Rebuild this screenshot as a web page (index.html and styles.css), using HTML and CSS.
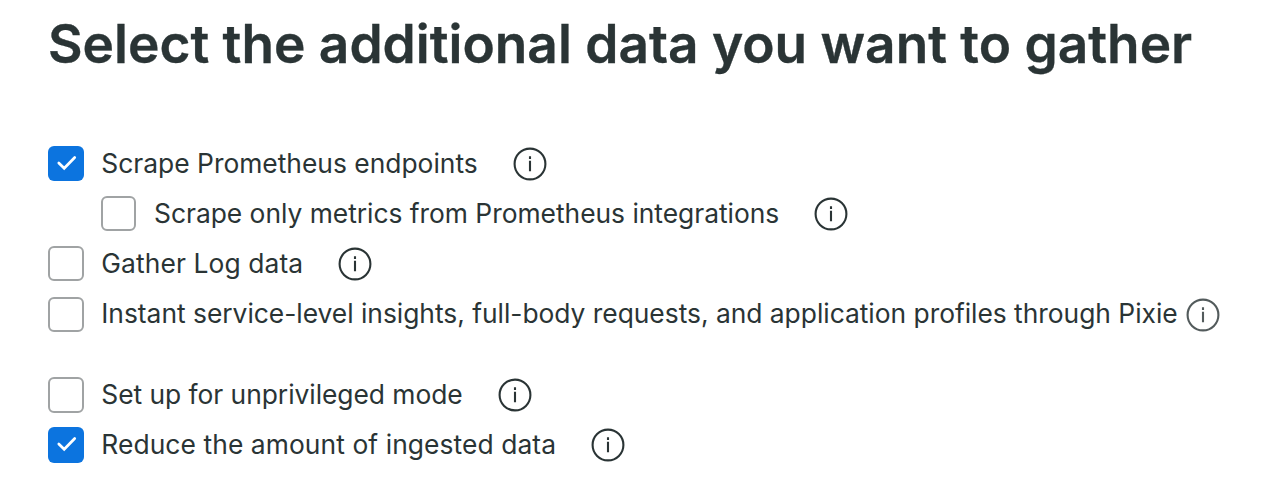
FILE: index.html
```html
<!DOCTYPE html>
<html lang="en">
<head>
<meta charset="utf-8">
<title>Select the additional data you want to gather</title>
<link rel="stylesheet" href="styles.css">
</head>
<body>
<main class="page">
<h1 class="title">Select the additional data you want to gather</h1>
<div class="row"><span class="box checked"><svg viewBox="0 0 36 35"><path d="M10.8 17l5.4 5.3 10.5-10.8"/></svg></span><span class="label">Scrape Prometheus endpoints</span><svg class="info" viewBox="0 0 34 34"><circle cx="17" cy="17" r="15.4"/><path d="M17 9.3v2.6M17 13.8v10.5"/></svg></div>
<div class="row nested"><span class="box"></span><span class="label">Scrape only metrics from Prometheus integrations</span><svg class="info" viewBox="0 0 34 34"><circle cx="17" cy="17" r="15.4"/><path d="M17 9.3v2.6M17 13.8v10.5"/></svg></div>
<div class="row log"><span class="box"></span><span class="label">Gather Log data</span><svg class="info" viewBox="0 0 34 34"><circle cx="17" cy="17" r="15.4"/><path d="M17 9.3v2.6M17 13.8v10.5"/></svg></div>
<div class="row pixie"><span class="box"></span><span class="label">Instant service-level insights, full-body requests, and application profiles through Pixie</span><svg class="info" viewBox="0 0 34 34"><circle cx="17" cy="17" r="15.4"/><path d="M17 9.3v2.6M17 13.8v10.5"/></svg></div>
<div class="row mode"><span class="box tall"></span><span class="label">Set up for unprivileged mode</span><svg class="info" viewBox="0 0 34 34"><circle cx="17" cy="17" r="15.4"/><path d="M17 9.3v2.6M17 13.8v10.5"/></svg></div>
<div class="row reduce"><span class="box tall checked"><svg viewBox="0 0 36 35"><path d="M10.8 17l5.4 5.3 10.5-10.8"/></svg></span><span class="label">Reduce the amount of ingested data</span><svg class="info" viewBox="0 0 34 34"><circle cx="17" cy="17" r="15.4"/><path d="M17 9.3v2.6M17 13.8v10.5"/></svg></div>
</main>
</body>
</html>
```

FILE: styles.css
```css
* { box-sizing: border-box; }
body { margin: 0; background: #fff; color: #2a3435; font-family: Inter, sans-serif; }
.page { padding: 11px 0 0 48px; }
.title { margin: 0 0 61.5px; font-size: 53.2px; line-height: 66px; font-weight: 600; white-space: nowrap; -webkit-text-stroke: 0.35px #2a3435; }
.row { display: flex; align-items: center; height: 50px; }
.nested { padding-left: 53px; }
.pixie { margin: 1px 0 30.5px; }
.box { flex: none; width: 36px; height: 35px; border: 2px solid #a0a3a4; border-radius: 6px; margin-right: 17.3px; }
.nested .box { width: 35px; margin-right: 18px; }
.tall { height: 36px; }
.checked { background: #0c74df; border: 0; }
.checked svg { display: block; width: 36px; height: 35px; fill: none; stroke: #fff; stroke-width: 2.7; stroke-linecap: round; }
.label { font-size: 26.4px; line-height: 36px; padding-bottom: 2px; white-space: nowrap; }
.info { flex: none; width: 34px; height: 34px; margin-left: 35px; fill: none; stroke: #2a3435; stroke-width: 2.1; }
.log .label { letter-spacing: 0.1px; }
.reduce .label { letter-spacing: 0.08px; }
.nested .label, .pixie .label { letter-spacing: -0.02px; }
.mode .label { letter-spacing: -0.04px; }
.pixie .label { padding-bottom: 3px; }
.pixie .info { margin-left: 8.7px; stroke: #535b5c; }
```
